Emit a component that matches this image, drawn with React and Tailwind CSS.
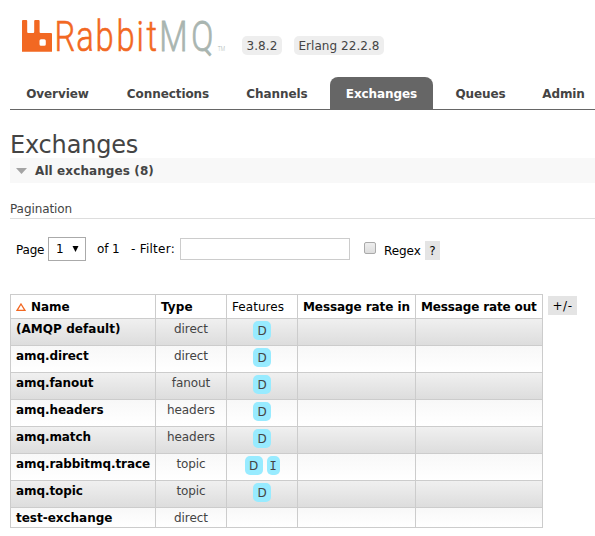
const tabs = [
  { label: 'Overview', cls: 'w-[93px] ml-[1px]' },
  { label: 'Connections', cls: 'w-[112px] ml-[8px]' },
  { label: 'Channels', cls: 'w-[92px] ml-[7px]' },
  { label: 'Exchanges', cls: 'w-[103px] ml-[7px]', active: true },
  { label: 'Queues', cls: 'w-[79px] ml-[8px]' },
  { label: 'Admin', cls: 'w-[73px] ml-[7px]' },
];

const rows = [
  ['(AMQP default)', 'direct', ['D'], 'tracking-[0.05px]'],
  ['amq.direct', 'direct', ['D'], ''],
  ['amq.fanout', 'fanout', ['D'], ''],
  ['amq.headers', 'headers', ['D'], ''],
  ['amq.match', 'headers', ['D'], ''],
  ['amq.rabbitmq.trace', 'topic', ['D', 'I'], ''],
  ['amq.topic', 'topic', ['D'], ''],
  ['test-exchange', 'direct', [], 'tracking-[-0.02px]'],
];

function Logo() {
  return (
    <svg width="220" height="72" viewBox="10 0 220 72" className="block shrink-0">
      <path
        fill="#f26822"
        fillRule="evenodd"
        d="M23 20h3.200q1 0 1 1v11q0 1 1 1h5q1 0 1-1V21q0-1 1-1h3.400q1 0 1 1v11q0 1 1 1h10.400q1 0 1 1v17.800H22V21q0-1 1-1z M41 39.200q-1.500 0-1.500 1.500v3.600q0 1.500 1.500 1.500h3.300q1.500 0 1.500-1.500v-3.600q0-1.500-1.500-1.500z"
      />
      <g fontFamily="Roboto, 'Liberation Sans', sans-serif" fontWeight="300" letterSpacing="0" transform="scale(0.76 1)">
        <text x="71.700 100.200 125.700 153.400 179.500 192.900" y="51" fontSize="43" fill="#f26822" stroke="#f26822" strokeWidth="0.600">Rabbit</text>
        <text x="209.400 251.500" y="51" fontSize="43" fill="#a9b5b0" stroke="#a9b5b0" strokeWidth="0.800">MQ</text>
        <text x="286.500" y="51" fontSize="6.500" fill="#a9b5b0">TM</text>
      </g>
    </svg>
  );
}

function Feature({ children }) {
  return (
    <span className={`flex h-[19px] items-center justify-center rounded-[5px] bg-[#98ebff] text-[#444] ${children === 'I' ? "w-[13px] font-['DejaVu_Sans_Mono',monospace]" : 'w-[18px]'}`}>
      {children}
    </span>
  );
}

function Cell({ className = '', children }) {
  return <div className={`shrink-0 border-r border-[#ccc] ${className}`}>{children}</div>;
}

export default function App() {
  return (
    <div className="h-[536px] w-[595px] overflow-hidden whitespace-nowrap bg-white pl-[10px] font-['DejaVu_Sans',Verdana,sans-serif] text-[12px] leading-[16px] tracking-[-0.08px] text-[#444]">
      <header className="flex h-[77px] items-start">
        <Logo />
        <span className="ml-[12px] mt-[36px] flex h-[19px] w-[40px] items-center justify-center rounded-[5px] bg-[#eee] tracking-[0.1px]">3.8.2</span>
        <span className="ml-[12px] mt-[36px] flex h-[19px] w-[90px] items-center justify-center rounded-[5px] bg-[#eee] tracking-[0.05px]">Erlang 22.2.8</span>
      </header>

      <nav className="flex h-[33px] border-b border-[#666] font-bold">
        {tabs.map((t) => (
          <a key={t.label} className={`flex h-[32px] shrink-0 items-center justify-center rounded-t-[8px] pt-px ${t.cls} ${t.active ? 'bg-[#666] text-white' : ''}`}>
            {t.label}
          </a>
        ))}
      </nav>

      <h1 className="h-[48px] pt-[19px] text-[24px] leading-[32px] tracking-[-0.18px]">Exchanges</h1>
      <h2 className="flex h-[25px] items-center bg-[#f8f8f8] pl-[6px] font-bold tracking-[0.1px]">
        <svg width="11" height="6" viewBox="0 0 11 6" className="mr-[8px] mt-px"><path d="M0 0h11L5.500 6z" fill="#a4a4a4" /></svg>
        All exchanges (8)
      </h2>
      <h3 className="mt-[18px] h-[18px] border-b border-[#ddd]">Pagination</h3>

      <div className="flex h-[75px] items-start pl-[6px] pt-[18px] text-black">
        <span className="mt-[5px] w-[32px] tracking-[-0.2px]">Page</span>
        <span className="flex h-[24px] w-[38px] items-center justify-between border border-[#aaa] pl-[7px] pr-[6px]">
          1
          <svg width="7" height="6" viewBox="0 0 7 6"><path d="M0.500 0h6L3.500 6z" /></svg>
        </span>
        <span className="ml-[11px] mt-[4px] w-[34px] tracking-[-0.1px]">of 1</span>
        <span className="mt-[4px] w-[49px] tracking-[0.25px]">- Filter:</span>
        <span className="mt-px h-[22px] w-[170px] border border-[#ccc]" />
        <span className="ml-[14px] mt-[5px] h-[12px] w-[12px] rounded-[2px] border border-[#aaa] bg-linear-to-b from-[#eee] to-[#ddd]" />
        <span className="ml-[8px] mt-[6px] w-[41px]">Regex</span>
        <span className="mt-[4px] flex h-[19px] w-[15px] items-center justify-center bg-[#e4e4e4]">?</span>
      </div>

      <div className="flex items-start">
        <div className="w-[533px] border-l border-t border-[#ccc]">
          <div className="flex h-[24px] border-b border-[#ccc] font-bold text-black">
            <Cell className="flex w-[145px] items-center pl-[5px]">
              <svg width="10" height="8" viewBox="0 0 10 8" className="mr-[5px]"><path d="M5 1L8.900 7.300H1.100z" fill="none" stroke="#f26822" strokeWidth="1.300" /></svg>
              Name
            </Cell>
            <Cell className="flex w-[71px] items-center pl-[5px] tracking-[0.1px]">Type</Cell>
            <Cell className="flex w-[71px] items-center pl-[5px] font-normal tracking-[0.05px]">Features</Cell>
            <Cell className="flex w-[118px] items-center pl-[5px]">Message rate in</Cell>
            <Cell className="flex w-[127px] items-center pl-[5px] tracking-[-0.14px]">Message rate out</Cell>
          </div>
          {rows.map(([name, type, features, spacing], i) => (
            <div
              key={name}
              className={`flex border-b border-[#ccc] bg-linear-to-b ${i === 7 ? 'h-[20px]' : 'h-[27px]'} ${i % 2 ? 'from-[#f8f8f8] to-white' : 'from-[#f0f0f0] to-[#ddd]'}`}
            >
              <Cell className={`w-[145px] pl-[5px] pt-[2px] font-bold text-black ${spacing}`}>{name}</Cell>
              <Cell className="w-[71px] pt-[2px] text-center">{type}</Cell>
              <Cell className="flex w-[71px] justify-center gap-[4px] pt-[2px]">
                {features.map((f) => <Feature key={f}>{f}</Feature>)}
              </Cell>
              <Cell className="w-[118px]" />
              <Cell className="w-[127px]" />
            </div>
          ))}
        </div>
        <span className="ml-[5px] mt-[2px] flex h-[19px] w-[29px] items-center justify-center bg-[#e4e4e4] tracking-[0.5px] text-black">+/-</span>
      </div>
    </div>
  );
}
